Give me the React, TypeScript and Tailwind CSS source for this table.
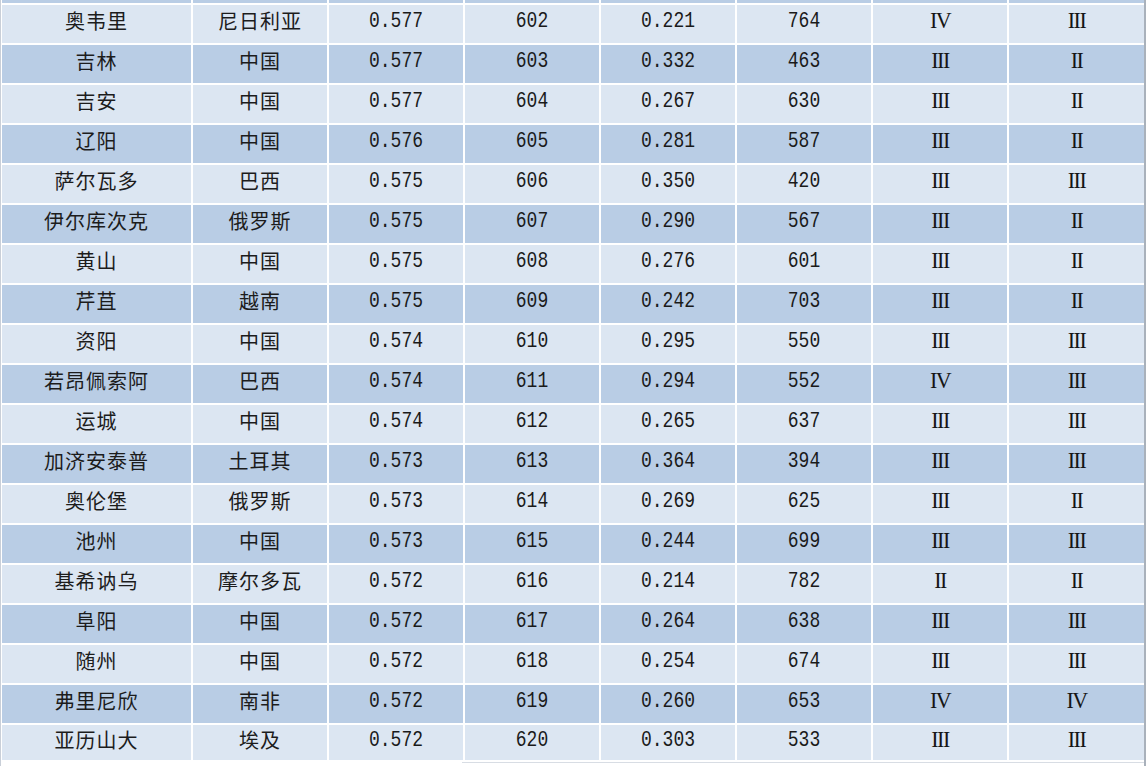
import React from "react";

type Row = [string, string, string, string, string, string, string, string];

const rows: Row[] = [
  ["奥韦里", "尼日利亚", "0.577", "602", "0.221", "764", "IV", "III"],
  ["吉林", "中国", "0.577", "603", "0.332", "463", "III", "II"],
  ["吉安", "中国", "0.577", "604", "0.267", "630", "III", "II"],
  ["辽阳", "中国", "0.576", "605", "0.281", "587", "III", "II"],
  ["萨尔瓦多", "巴西", "0.575", "606", "0.350", "420", "III", "III"],
  ["伊尔库次克", "俄罗斯", "0.575", "607", "0.290", "567", "III", "II"],
  ["黄山", "中国", "0.575", "608", "0.276", "601", "III", "II"],
  ["芹苴", "越南", "0.575", "609", "0.242", "703", "III", "II"],
  ["资阳", "中国", "0.574", "610", "0.295", "550", "III", "III"],
  ["若昂佩索阿", "巴西", "0.574", "611", "0.294", "552", "IV", "III"],
  ["运城", "中国", "0.574", "612", "0.265", "637", "III", "III"],
  ["加济安泰普", "土耳其", "0.573", "613", "0.364", "394", "III", "III"],
  ["奥伦堡", "俄罗斯", "0.573", "614", "0.269", "625", "III", "II"],
  ["池州", "中国", "0.573", "615", "0.244", "699", "III", "III"],
  ["基希讷乌", "摩尔多瓦", "0.572", "616", "0.214", "782", "II", "II"],
  ["阜阳", "中国", "0.572", "617", "0.264", "638", "III", "III"],
  ["随州", "中国", "0.572", "618", "0.254", "674", "III", "III"],
  ["弗里尼欣", "南非", "0.572", "619", "0.260", "653", "IV", "IV"],
  ["亚历山大", "埃及", "0.572", "620", "0.303", "533", "III", "III"],
];

const cols = "grid grid-cols-[189px_134px_134px_134px_134px_134px_134px_135px] gap-x-[2px]";

function Cell({ v, i }: { v: string; i: number }) {
  if (i <= 1) {
    return (
      <span className="text-[20px] text-[#1c1c1c] [font-family:'Noto_Sans_CJK_SC','Noto_Sans',sans-serif] leading-none tracking-[1px]">
        {v}
      </span>
    );
  }
  if (i >= 6) {
    return (
      <span className="inline-block text-[22px] text-[#151515] [font-family:'Liberation_Serif',serif] leading-none tracking-[-1.5px] scale-y-[1.05]">
        {v}
      </span>
    );
  }
  return (
    <span className="inline-block text-[18px] text-[#1a1a1a] [font-family:'Liberation_Mono',monospace] leading-none scale-y-[1.22]">
      {v}
    </span>
  );
}

export default function App() {
  return (
    <div className="w-[1148px] h-[766px] bg-white overflow-hidden flex">
      <div className="w-[1px] h-full bg-[#c9cfd8]" />
      <div className="w-[1px] h-full bg-white" />
      <div className="flex flex-col gap-y-[2px] w-[1142px]">
        <div className={`${cols} h-[3px]`}>
          {Array.from({ length: 8 }).map((_, k) => (
            <div key={k} className="bg-[#b9cde5]" />
          ))}
        </div>
        {rows.map((r, ri) => (
          <div
            key={ri}
            className={`${cols} ${ri === rows.length - 1 ? "h-[35px]" : "h-[38px]"}`}
          >
            {r.map((v, ci) => (
              <div
                key={ci}
                className={`flex items-center justify-center pb-[6px] ${
                  ri % 2 === 0 ? "bg-[#dce6f2]" : "bg-[#b9cde5]"
                }`}
              >
                <Cell v={v} i={ci} />
              </div>
            ))}
          </div>
        ))}
        <div className="h-[1px] ml-[460px] bg-[#d8dde4]" />
      </div>
      <div className="w-[2px] h-full bg-[#a9b1bb]" />
      <div className="flex-1 bg-white" />
    </div>
  );
}
